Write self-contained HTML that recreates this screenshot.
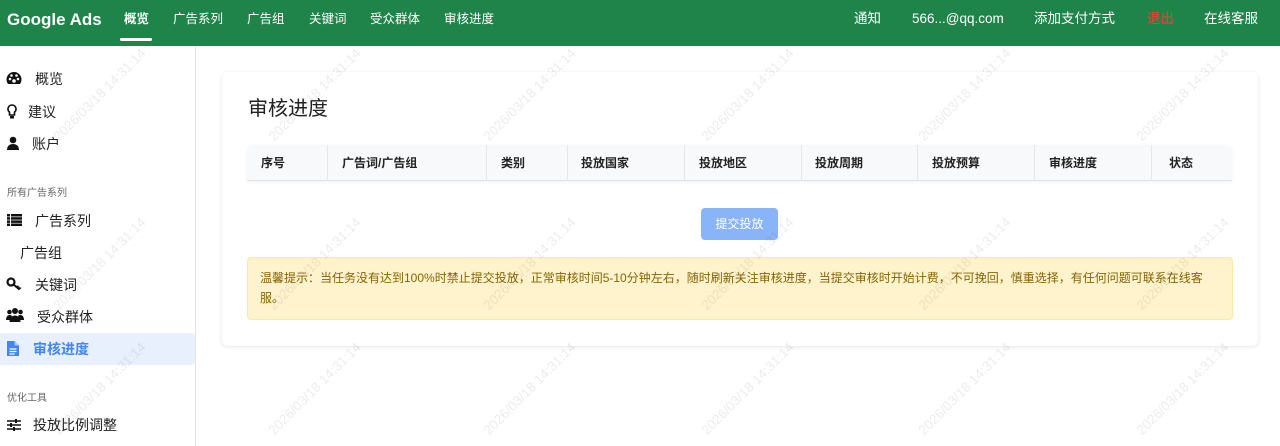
<!DOCTYPE html>
<html><head><meta charset="utf-8"><style>
*{box-sizing:border-box;margin:0;padding:0}
html,body{width:1280px;height:446px;overflow:hidden}
body{background:#fff;font-family:"Liberation Sans","Noto Sans CJK SC",sans-serif;color:#212529;position:relative}
.top{position:absolute;left:0;top:0;width:1280px;height:46px;background:#1e8449;color:#fff}
.logo{position:absolute;left:7px;top:10px;font-size:17px;font-weight:bold;line-height:20px}
.nav{position:absolute;top:9px;font-size:12.5px;line-height:20px}
.nav.act{font-weight:bold}
.under{position:absolute;left:120px;top:38px;width:32px;height:3px;background:#fff;border-radius:2px}
.rt{position:absolute;top:9px;font-size:13.5px;line-height:20px}
.side{position:absolute;left:0;top:46px;width:196px;height:400px;border-right:1px solid #e3e3e3}
.si{position:absolute;font-size:14px;color:#222}
.sh{position:absolute;left:7px;font-size:10px;color:#666}
.act2{position:absolute;left:0;top:287px;width:195px;height:32px;background:#e8f0fe;border-radius:0 4px 4px 0}
.card{position:absolute;left:222px;top:72px;width:1036px;height:274px;border-radius:6px;box-shadow:0 1px 4px rgba(0,0,0,.1);background:#fff}
.h{position:absolute;left:248px;top:95px;font-size:20px;color:#222;line-height:28px}
.th{position:absolute;left:247px;top:145px;width:985px;height:36px;background:#f8f9fa;border-bottom:1px solid #dee2e6;border-radius:6px 6px 0 0;box-shadow:0 1px 3px rgba(0,0,0,.06)}
.th span{position:absolute;top:9px;font-size:12px;font-weight:bold;color:#222}
.th i{position:absolute;top:0;width:1px;height:36px;background:#e6e6e6}
.btn{position:absolute;left:701px;top:208px;width:77px;height:32px;background:#8ab4f8;border-radius:4px;color:#fff;font-size:12px;text-align:center;line-height:32px}
.warn{position:absolute;left:247px;top:257px;width:986px;height:63px;background:#fff3cd;border:1px solid #ffe8a1;border-radius:4px;color:#856404;font-size:12px;line-height:20px;padding:10px 12px}
.wmw{position:absolute;left:0;top:0;width:1280px;height:446px;overflow:hidden;pointer-events:none;z-index:10}
.wm{position:absolute;font-size:13.5px;color:rgba(0,0,0,.08);transform:rotate(-45deg);white-space:nowrap;width:150px;height:18px;line-height:18px;text-align:center}
</style></head><body>
<div class="top">
<div class="logo">Google Ads</div>
<div class="nav act" style="left:124px">概览</div><div class="under"></div>
<div class="nav" style="left:173px">广告系列</div>
<div class="nav" style="left:247px">广告组</div>
<div class="nav" style="left:309px">关键词</div>
<div class="nav" style="left:370px">受众群体</div>
<div class="nav" style="left:444px">审核进度</div>
<div class="rt" style="left:854px">通知</div>
<div class="rt" style="left:912px">566...@qq.com</div>
<div class="rt" style="left:1034px">添加支付方式</div>
<div class="rt" style="left:1147px;color:#ff3b30">退出</div>
<div class="rt" style="left:1204px">在线客服</div>
</div>
<div class="side">
<div class="act2"></div>
<svg style="position:absolute;left:6px;top:25px" width="16" height="14" viewBox="0 0 16 14"><path d="M8 1A7.5 7.5 0 0 0 .5 8.5c0 1.7.6 3.3 1.5 4.5h12c.9-1.2 1.5-2.8 1.5-4.5A7.5 7.5 0 0 0 8 1z" fill="#111"/><circle cx="4" cy="8" r="1.3" fill="#fff"/><circle cx="5.5" cy="4.5" r="1.3" fill="#fff"/><circle cx="10.5" cy="4.5" r="1.3" fill="#fff"/><circle cx="12" cy="8" r="1.3" fill="#fff"/><circle cx="8" cy="10" r="1.8" fill="#fff"/></svg>
<div class="si" style="left:35px;top:23px">概览</div>
<svg style="position:absolute;left:7px;top:58px" width="10" height="15" viewBox="0 0 10 15"><path d="M5 1a4 4 0 0 0-2.5 7.1V11h5V8.1A4 4 0 0 0 5 1z" fill="none" stroke="#111" stroke-width="1.6"/><rect x="3" y="12" width="4" height="2.5" fill="#111"/></svg>
<div class="si" style="left:28px;top:56px">建议</div>
<svg style="position:absolute;left:6px;top:90px" width="14" height="14" viewBox="0 0 14 14"><circle cx="7" cy="4" r="3.3" fill="#111"/><path d="M1 14c0-4 2.5-6 6-6s6 2 6 6z" fill="#111"/></svg>
<div class="si" style="left:32px;top:88px">账户</div>
<div class="sh" style="top:138px">所有广告系列</div>
<svg style="position:absolute;left:7px;top:168px" width="15" height="12" viewBox="0 0 15 12"><g fill="#111"><rect x="0" y="0" width="3" height="2.5"/><rect x="4" y="0" width="11" height="2.5"/><rect x="0" y="3.2" width="3" height="2.5"/><rect x="4" y="3.2" width="11" height="2.5"/><rect x="0" y="6.4" width="3" height="2.5"/><rect x="4" y="6.4" width="11" height="2.5"/><rect x="0" y="9.5" width="3" height="2.5"/><rect x="4" y="9.5" width="11" height="2.5"/></g></svg>
<div class="si" style="left:35px;top:165px">广告系列</div>
<div class="si" style="left:20px;top:197px">广告组</div>
<svg style="position:absolute;left:6px;top:231px" width="16" height="14" viewBox="0 0 16 14"><circle cx="5" cy="5" r="3.5" fill="none" stroke="#111" stroke-width="2.2"/><path d="M7.5 7.5l6 5M11 10.5l1.5-1.5M13 12l1.5-1.5" stroke="#111" stroke-width="2"/></svg>
<div class="si" style="left:35px;top:229px">关键词</div>
<svg style="position:absolute;left:6px;top:261px" width="18" height="15" viewBox="0 0 18 15"><g fill="#111"><circle cx="9" cy="4" r="3"/><circle cx="3.5" cy="5" r="2.3"/><circle cx="14.5" cy="5" r="2.3"/><path d="M3.5 15c0-4 2.5-6.5 5.5-6.5s5.5 2.5 5.5 6.5z"/><path d="M0 13c0-3 1.5-5 3.5-5s2.5 1 2.5 1L4 13z"/><path d="M18 13c0-3-1.5-5-3.5-5S12 9 12 9l2 4z"/></g></svg>
<div class="si" style="left:37px;top:261px">受众群体</div>
<svg style="position:absolute;left:7px;top:295px" width="12" height="15" viewBox="0 0 12 15"><path d="M0 0h7.5L12 4.5V15H0z" fill="#4285f4"/><path d="M7.5 0v4.5H12" fill="#a8c7fa"/><path d="M2.5 8h7M2.5 10.5h7M2.5 13h5" stroke="#fff" stroke-width="1.2"/></svg>
<div class="si" style="left:33px;top:293px;color:#4285f4;font-weight:bold">审核进度</div>
<div class="sh" style="top:343px">优化工具</div>
<svg style="position:absolute;left:7px;top:373px" width="14" height="12" viewBox="0 0 14 12"><g stroke="#111" stroke-width="1.4"><path d="M0 2h14M0 6h14M0 10h14"/></g><g fill="#111"><rect x="8" y="0" width="2" height="4"/><rect x="3" y="4" width="2" height="4"/><rect x="6" y="8" width="2" height="4"/></g></svg>
<div class="si" style="left:33px;top:369px">投放比例调整</div>
</div>
<div class="card"></div>
<div class="h">审核进度</div>
<div class="th">
<span style="left:14px">序号</span><i style="left:80px"></i>
<span style="left:95px">广告词/广告组</span><i style="left:239px"></i>
<span style="left:254px">类别</span><i style="left:320px"></i>
<span style="left:334px">投放国家</span><i style="left:437px"></i>
<span style="left:452px">投放地区</span><i style="left:554px"></i>
<span style="left:568px">投放周期</span><i style="left:670px"></i>
<span style="left:685px">投放预算</span><i style="left:787px"></i>
<span style="left:802px">审核进度</span><i style="left:904px"></i>
<span style="left:922px">状态</span>
</div>
<div class="btn">提交投放</div>
<div class="warn">温馨提示：当任务没有达到100%时禁止提交投放，正常审核时间5-10分钟左右，随时刷新关注审核进度，当提交审核时开始计费，不可挽回，慎重选择，有任何问题可联系在线客服。</div>
<div class="wmw">
<div class="wm" style="left:25px;top:86px">2026/03/18 14:31:14</div>
<div class="wm" style="left:240px;top:86px">2026/03/18 14:31:14</div>
<div class="wm" style="left:455px;top:86px">2026/03/18 14:31:14</div>
<div class="wm" style="left:673px;top:86px">2026/03/18 14:31:14</div>
<div class="wm" style="left:890px;top:86px">2026/03/18 14:31:14</div>
<div class="wm" style="left:1108px;top:86px">2026/03/18 14:31:14</div>
<div class="wm" style="left:25px;top:255px">2026/03/18 14:31:14</div>
<div class="wm" style="left:240px;top:255px">2026/03/18 14:31:14</div>
<div class="wm" style="left:455px;top:255px">2026/03/18 14:31:14</div>
<div class="wm" style="left:673px;top:255px">2026/03/18 14:31:14</div>
<div class="wm" style="left:890px;top:255px">2026/03/18 14:31:14</div>
<div class="wm" style="left:1108px;top:255px">2026/03/18 14:31:14</div>
<div class="wm" style="left:25px;top:380px">2026/03/18 14:31:14</div>
<div class="wm" style="left:240px;top:380px">2026/03/18 14:31:14</div>
<div class="wm" style="left:455px;top:380px">2026/03/18 14:31:14</div>
<div class="wm" style="left:673px;top:380px">2026/03/18 14:31:14</div>
<div class="wm" style="left:890px;top:380px">2026/03/18 14:31:14</div>
<div class="wm" style="left:1108px;top:380px">2026/03/18 14:31:14</div>
</div>
</body></html>
